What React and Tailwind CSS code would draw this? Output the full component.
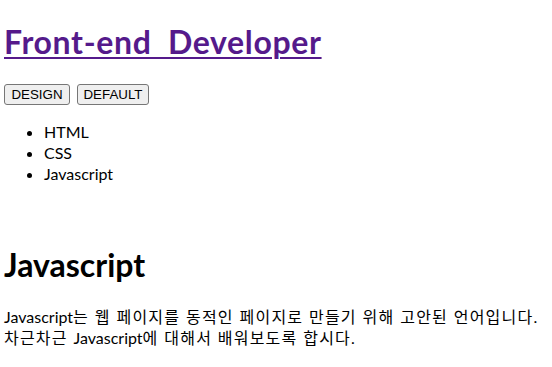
export default function App() {
  const btn =
    "h-[21px] bg-[#efefef] border border-[#767676] rounded-[3px] text-[13.33px] font-['Liberation_Sans',sans-serif] leading-[17px] text-black";
  return (
    <div className="bg-white text-black min-h-[367px] px-[4px] pt-[21px] font-['Lato','Noto_Sans_CJK_KR',sans-serif]">
      <h1 className="text-[32px] font-bold leading-[42px] tracking-[0.65px] [word-spacing:8px]">
        <a href="#" className="text-[#551a8b] underline decoration-[2px] underline-offset-[3px]">
          Front-end Developer
        </a>
      </h1>
      <div className="mt-[21px] flex gap-[7px] h-[21px] items-start">
        <button className={btn + " w-[66px]"}>DESIGN</button>
        <button className={btn + " w-[72px]"}>DEFAULT</button>
      </div>
      <ul className="mt-[16px] list-disc pl-[40px] text-[16px] leading-[21px]">
        <li>HTML</li>
        <li>CSS</li>
        <li>Javascript</li>
      </ul>
      <h1 className="mt-[60px] text-[32px] font-bold leading-[42px]">Javascript</h1>
      <p className="mt-[20px] text-[16px] leading-[21px] tracking-[1.2px] [word-spacing:0.5px] font-['Lato','Noto_Sans_CJK_KR',sans-serif]">
        <span className="tracking-normal">Javascript</span>는 웹 페이지를 동적인 페이지로 만들기 위해 고안된 언어입니다.
        <br />
        차근차근 <span className="tracking-normal">Javascript</span>에 대해서 배워보도록 합시다.
      </p>
    </div>
  );
}
